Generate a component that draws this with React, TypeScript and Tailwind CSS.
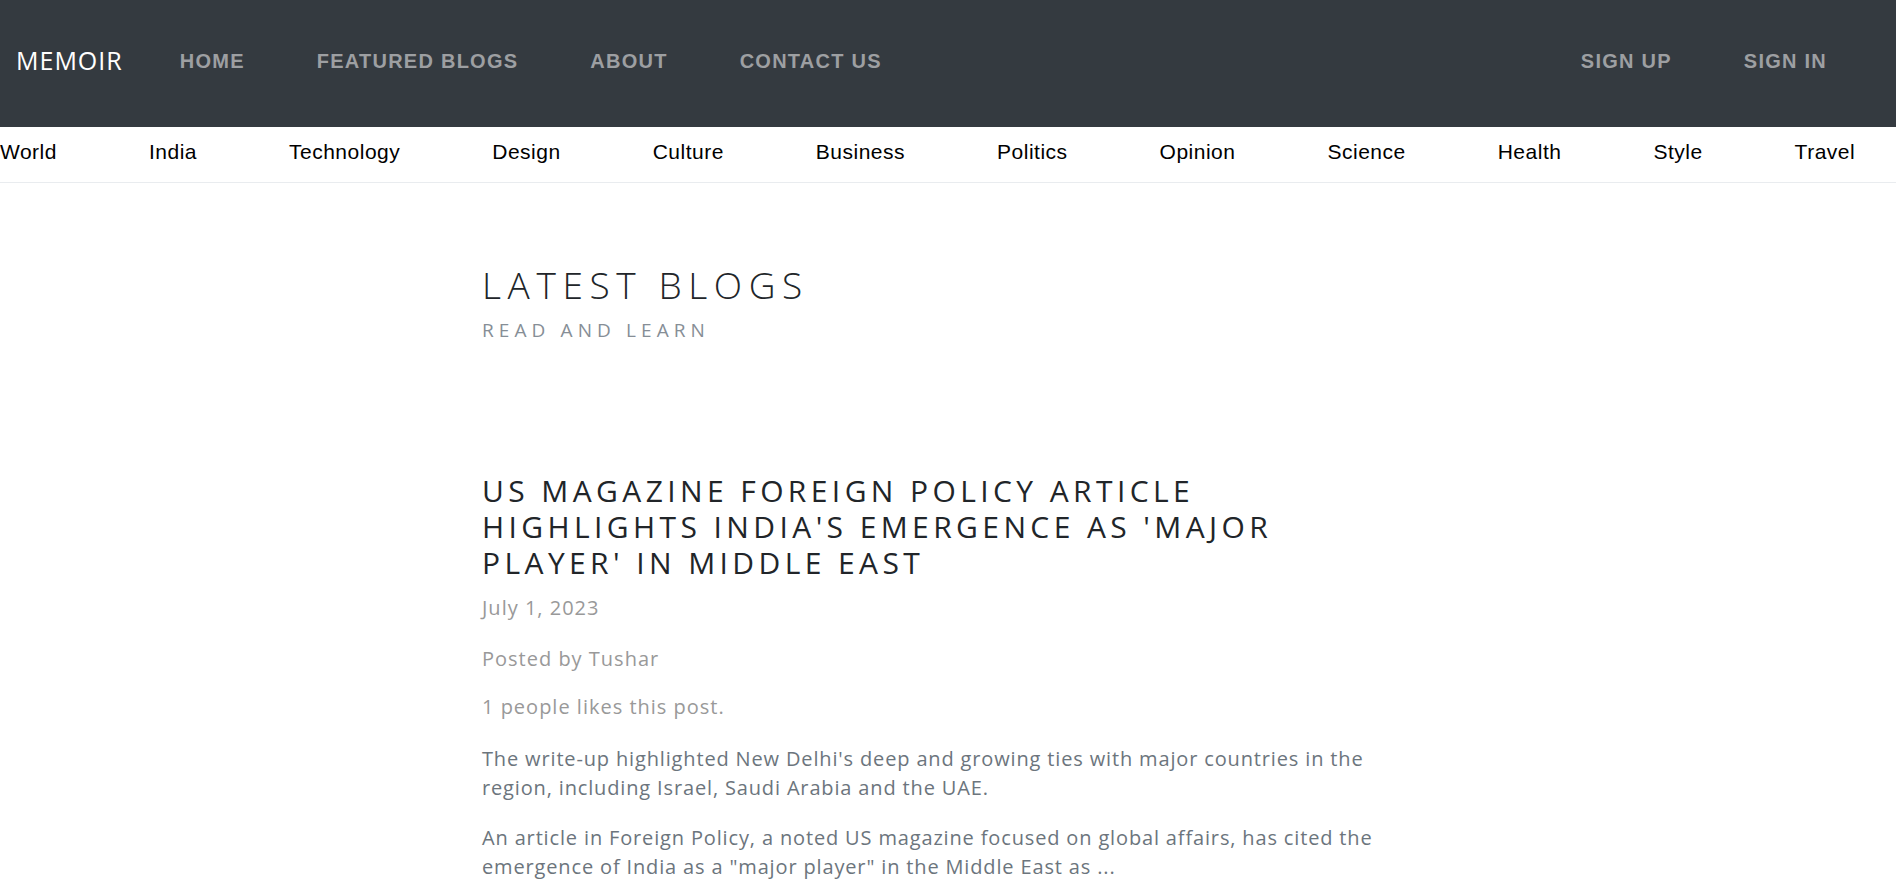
import React from 'react';

const navLinks = ['HOME', 'FEATURED BLOGS', 'ABOUT', 'CONTACT US'];
const categories = [
  'World',
  'India',
  'Technology',
  'Design',
  'Culture',
  'Business',
  'Politics',
  'Opinion',
  'Science',
  'Health',
  'Style',
  'Travel',
];

const Header = () => {
  return (
    <nav className="h-[127px] bg-[#343a40] flex items-center pl-4 pr-[33px] pb-[5px]">
      <a className="text-white text-[25px] tracking-[1px] font-['Open_Sans',sans-serif] mr-[21px]">MEMOIR</a>
      <ul className="flex items-center">
        {navLinks.map((l) => (
          <li key={l}>
            <a className="block px-9 text-[20px] font-bold tracking-[1.25px] text-[#9d9fa2] font-['Liberation_Sans',Arial,sans-serif]">
              {l}
            </a>
          </li>
        ))}
      </ul>
      <ul className="flex items-center ml-auto">
        {['SIGN UP', 'SIGN IN'].map((l) => (
          <li key={l}>
            <a className="block px-9 text-[20px] font-bold tracking-[1.25px] text-[#9d9fa2] font-['Liberation_Sans',Arial,sans-serif]">
              {l}
            </a>
          </li>
        ))}
      </ul>
    </nav>
  );
};

const Categories = () => {
  return (
    <div className="h-[56px] pb-[5px] border-b border-[#e9ecef] flex items-center gap-[92px] font-['Liberation_Sans',Arial,sans-serif]">
      {categories.map((c) => (
        <a key={c} className="text-[21px] tracking-[0.5px] text-black">
          {c}
        </a>
      ))}
    </div>
  );
};

const App = () => {
  return (
    <div className="min-h-screen bg-white font-['Open_Sans',sans-serif]">
      <Header />
      <Categories />

      <main className="w-[932px] mx-auto pt-[80px]">
        {/* Page heading */}
        <h1 className="text-[37px] leading-[44px] font-light tracking-[6.6px] text-[#212529]">LATEST BLOGS</h1>
        <h2 className="mt-[9px] text-[19px] leading-[28px] tracking-[5.1px] text-[#868e96]">READ AND LEARN</h2>

        {/* Post preview */}
        <article className="mt-[129px]">
          <h3 className="text-[30px] leading-[36px] tracking-[4.4px] text-[#212529]">
            US MAGAZINE FOREIGN POLICY ARTICLE HIGHLIGHTS INDIA'S EMERGENCE AS 'MAJOR PLAYER' IN MIDDLE EAST
          </h3>
          <p className="mt-[13px] text-[20px] leading-[28px] tracking-[1px] text-[#999]">July 1, 2023</p>
          <p className="mt-[23px] text-[20px] leading-[28px] tracking-[1px] text-[#999]">Posted by Tushar</p>
          <p className="mt-[20px] text-[20px] leading-[28px] tracking-[1px] text-[#999]">1 people likes this post.</p>
          <p className="mt-[23px] text-[20px] leading-[29px] tracking-[0.85px] text-[#6c757d]">
            The write-up highlighted New Delhi's deep and growing ties with major countries in the region, including Israel, Saudi Arabia and the UAE.
          </p>
          <p className="mt-[21px] text-[20px] leading-[29px] tracking-[0.85px] text-[#6c757d]">
            An article in Foreign Policy, a noted US magazine focused on global affairs, has cited the emergence of India as a "major player" in the Middle East as ...
          </p>
        </article>
      </main>
    </div>
  );
};

export default App;
